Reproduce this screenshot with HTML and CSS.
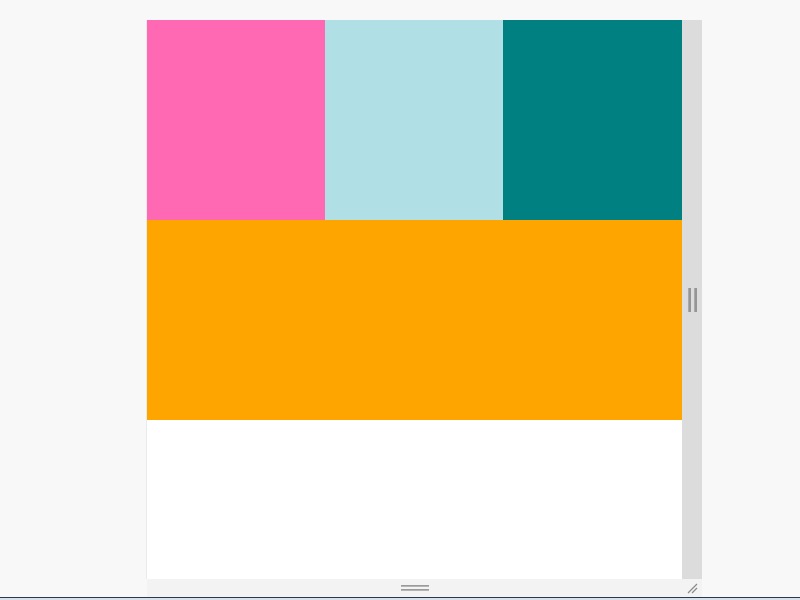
FILE: index.html
```html
<!DOCTYPE html>
<html>
<head>
<meta charset="utf-8">
<link rel="stylesheet" href="styles.css">
</head>
<body>
<div class="page">
  <div class="frame">
    <div class="panel">
      <div class="content">
        <div class="row">
          <div class="cell pink"></div>
          <div class="cell blue"></div>
          <div class="cell teal"></div>
        </div>
        <div class="band orange"></div>
        <div class="rest"></div>
      </div>
      <div class="vbar">
        <div class="vgrip"><span></span><span></span></div>
      </div>
    </div>
    <div class="hbar">
      <div class="hgrip"><span></span><span></span></div>
      <svg class="corner" width="12" height="12" viewBox="0 0 12 12">
        <path d="M2 11 L11 2 M6 11 L11 6" stroke="#8a8a8a" stroke-width="1.2" fill="none"/>
      </svg>
    </div>
  </div>
  <div class="taskline"></div>
</div>
</body>
</html>
```

FILE: styles.css
```css
html, body {
  margin: 0;
  padding: 0;
}
body {
  width: 800px;
  height: 600px;
  overflow: hidden;
  background: #f8f8f8;
}
.page {
  display: flex;
  flex-direction: column;
  height: 600px;
}
.frame {
  margin: 20px 0 0 147px;
  width: 555px;
  display: flex;
  flex-direction: column;
}
.panel {
  display: flex;
  height: 559px;
}
.content {
  width: 535px;
  background: #ffffff;
  display: flex;
  flex-direction: column;
  box-shadow: -1px 0 0 #ebebeb;
}
.row {
  display: grid;
  grid-template-columns: 178px 178px 1fr;
  height: 200px;
}
.pink { background: #ff69b4; }
.blue { background: #b0e0e6; }
.teal { background: #008080; }
.band { height: 200px; }
.orange { background: #ffa500; }
.rest { flex: 1; background: #ffffff; }
.vbar {
  width: 20px;
  background: #dcdcdc;
  display: flex;
  align-items: center;
  justify-content: center;
}
.vgrip {
  display: flex;
  gap: 3px;
  height: 24px;
}
.vgrip span {
  width: 2px;
  height: 24px;
  background: #959595;
  border-left: 1px solid #a8a8a8;
  box-sizing: content-box;
}
.hbar {
  height: 18px;
  background: #f3f3f3;
  display: flex;
  align-items: center;
  justify-content: center;
  position: relative;
}
.hgrip {
  display: flex;
  flex-direction: column;
  gap: 2px;
  margin-left: -20px;
}
.hgrip span {
  width: 28px;
  height: 1px;
  background: #9a9a9a;
  border-bottom: 1px solid #b5b5b5;
}
.corner {
  position: absolute;
  right: 4px;
  top: 3px;
}
.taskline {
  margin-top: auto;
  height: 3px;
  border-top: 1px solid #2b3a4a;
  background: #d6e2ea;
}
```
